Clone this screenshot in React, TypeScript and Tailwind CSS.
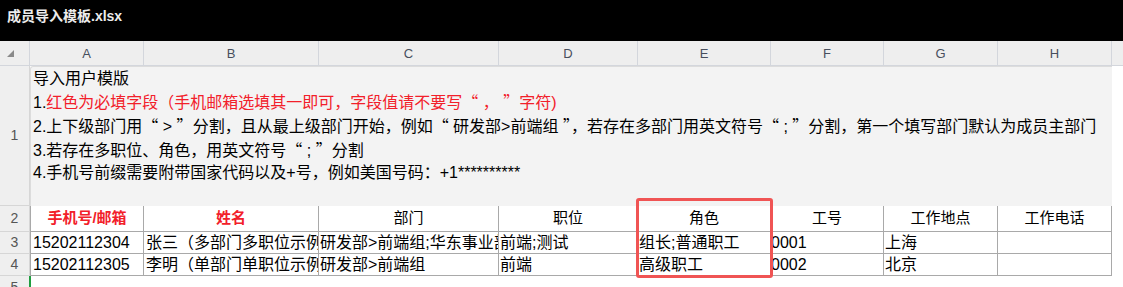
import React from "react";

const COLS = "grid grid-cols-[30px_114px_175px_180px_139px_133px_113px_114px_114px_1fr]";
const FONT = { fontFamily: '"Liberation Sans", "Noto Sans CJK SC", sans-serif' };
const CJK = { fontFamily: '"Noto Sans CJK SC", sans-serif' };

function RowHead({ n, h }: { n: string; h: string }) {
  return (
    <div className={`${h} flex items-center justify-center bg-[#efefef] border-r border-b border-[#d6d6d6] text-[14px] text-[#555]`}>
      {n}
    </div>
  );
}

function Cell({
  children,
  className = "",
  color = "text-black",
  size = "text-[16px]",
}: {
  children?: React.ReactNode;
  className?: string;
  color?: string;
  size?: string;
}) {
  return (
    <div className={`flex items-center overflow-hidden whitespace-nowrap border-r border-b border-[#a9a9a9] bg-white ${size} ${color} ${className}`}>
      {children}
    </div>
  );
}

function Q({ c }: { c: string }) {
  return <span style={CJK}>{c}</span>;
}

export default function App() {
  const letters = ["A", "B", "C", "D", "E", "F", "G", "H"];
  return (
    <div className="w-[1123px] h-[287px] overflow-hidden bg-white relative" style={FONT}>
      <div className="h-[41px] bg-black flex items-center pl-[7px] pb-[9px] text-[14px] font-bold text-[#ececec]">
        成员导入模板.xlsx
      </div>

      {/* column letters */}
      <div className={`${COLS} h-[25px] bg-[#eeeeee] border-b border-[#d3d6dc]`}>
        <div className="flex items-center pl-[7px] border-r border-[#d3d6dc]">
          <svg width="7" height="7" viewBox="0 0 7 7">
            <polygon points="7,0 7,7 0,7" fill="#8a8a8a" />
          </svg>
        </div>
        {letters.map((l) => (
          <div key={l} className="flex items-center justify-center pt-[2px] border-r border-[#d3d6dc] text-[13px] text-[#474e5d]">
            {l}
          </div>
        ))}
        <div />
      </div>

      {/* row 1 */}
      <div className={`${COLS} h-[140px]`}>
        <RowHead n="1" h="h-[140px]" />
        <div className="col-span-8 bg-[#f3f3f3] border-l border-t border-[#dcdcdc] rounded-tl-[3px] pl-[2px] pt-[1px] text-[16px] leading-[22px] text-black whitespace-nowrap overflow-hidden">
          <div>导入用户模版</div>
          <div>
            1.<span className="text-[#f2202a]">红色为必填字段（手机邮箱选填其一即可，字段值请不要写<Q c="“" /> ， <Q c="”" />字符)</span>
          </div>
          <div>
            2.上下级部门用<Q c="“" /> &gt; <Q c="”" />分割，且从最上级部门开始，例如<Q c="“" /> 研发部&gt;前端组 <Q c="”" />，若存在多部门用英文符号<Q c="“" /> ; <Q c="”" />分割，第一个填写部门默认为成员主部门
          </div>
          <div>
            3.若存在多职位、角色，用英文符号<Q c="“" /> ; <Q c="”" />分割
          </div>
          <div>4.手机号前缀需要附带国家代码以及+号，例如美国号码：+1**********</div>
        </div>
        <div />
      </div>

      {/* row 2 */}
      <div className={`${COLS} h-[26px]`}>
        <RowHead n="2" h="h-[26px]" />
        <Cell className="justify-center font-bold border-l" size="text-[15px]" color="text-[#f2202a]">手机号/邮箱</Cell>
        <Cell className="justify-center font-bold" size="text-[15px]" color="text-[#f2202a]">姓名</Cell>
        <Cell className="justify-center" size="text-[15px]">部门</Cell>
        <Cell className="justify-center" size="text-[15px]">职位</Cell>
        <Cell className="justify-center" size="text-[15px]">角色</Cell>
        <Cell className="justify-center" size="text-[15px]">工号</Cell>
        <Cell className="justify-center" size="text-[15px]">工作地点</Cell>
        <Cell className="justify-center" size="text-[15px]">工作电话</Cell>
        <div />
      </div>

      {/* row 3 */}
      <div className={`${COLS} h-[22px]`}>
        <RowHead n="3" h="h-[22px]" />
        <Cell className="pl-[2px] border-l">15202112304</Cell>
        <Cell className="pl-[2px]">张三（多部门多职位示例）</Cell>
        <Cell className="pl-[1px]">研发部&gt;前端组;华东事业部</Cell>
        <Cell className="pl-[1px]">前端;测试</Cell>
        <Cell className="pl-[1px]">组长;普通职工</Cell>
        <Cell>0001</Cell>
        <Cell className="pl-[1px]">上海</Cell>
        <Cell />
        <div />
      </div>

      {/* row 4 */}
      <div className={`${COLS} h-[22px]`}>
        <RowHead n="4" h="h-[22px]" />
        <Cell className="pl-[2px] border-l">15202112305</Cell>
        <Cell className="pl-[2px]">李明（单部门单职位示例）</Cell>
        <Cell className="pl-[1px]">研发部&gt;前端组</Cell>
        <Cell className="pl-[1px]">前端</Cell>
        <Cell className="pl-[1px]">高级职工</Cell>
        <Cell>0002</Cell>
        <Cell className="pl-[1px]">北京</Cell>
        <Cell />
        <div />
      </div>

      {/* row 5 */}
      <div className={`${COLS} h-[22px]`}>
        <div className="h-[22px] flex items-center justify-center bg-[#efefef] border-r border-[#d6d6d6] text-[14px] text-[#555]">5</div>
        <div className="border-l-2 border-[#1f9d3f] -ml-[1px]" />
      </div>

      {/* red highlight box */}
      <div className="absolute left-[636px] top-[198px] w-[137px] h-[80px] border-[3px] border-[#f05454] rounded-[3px]" />
    </div>
  );
}
